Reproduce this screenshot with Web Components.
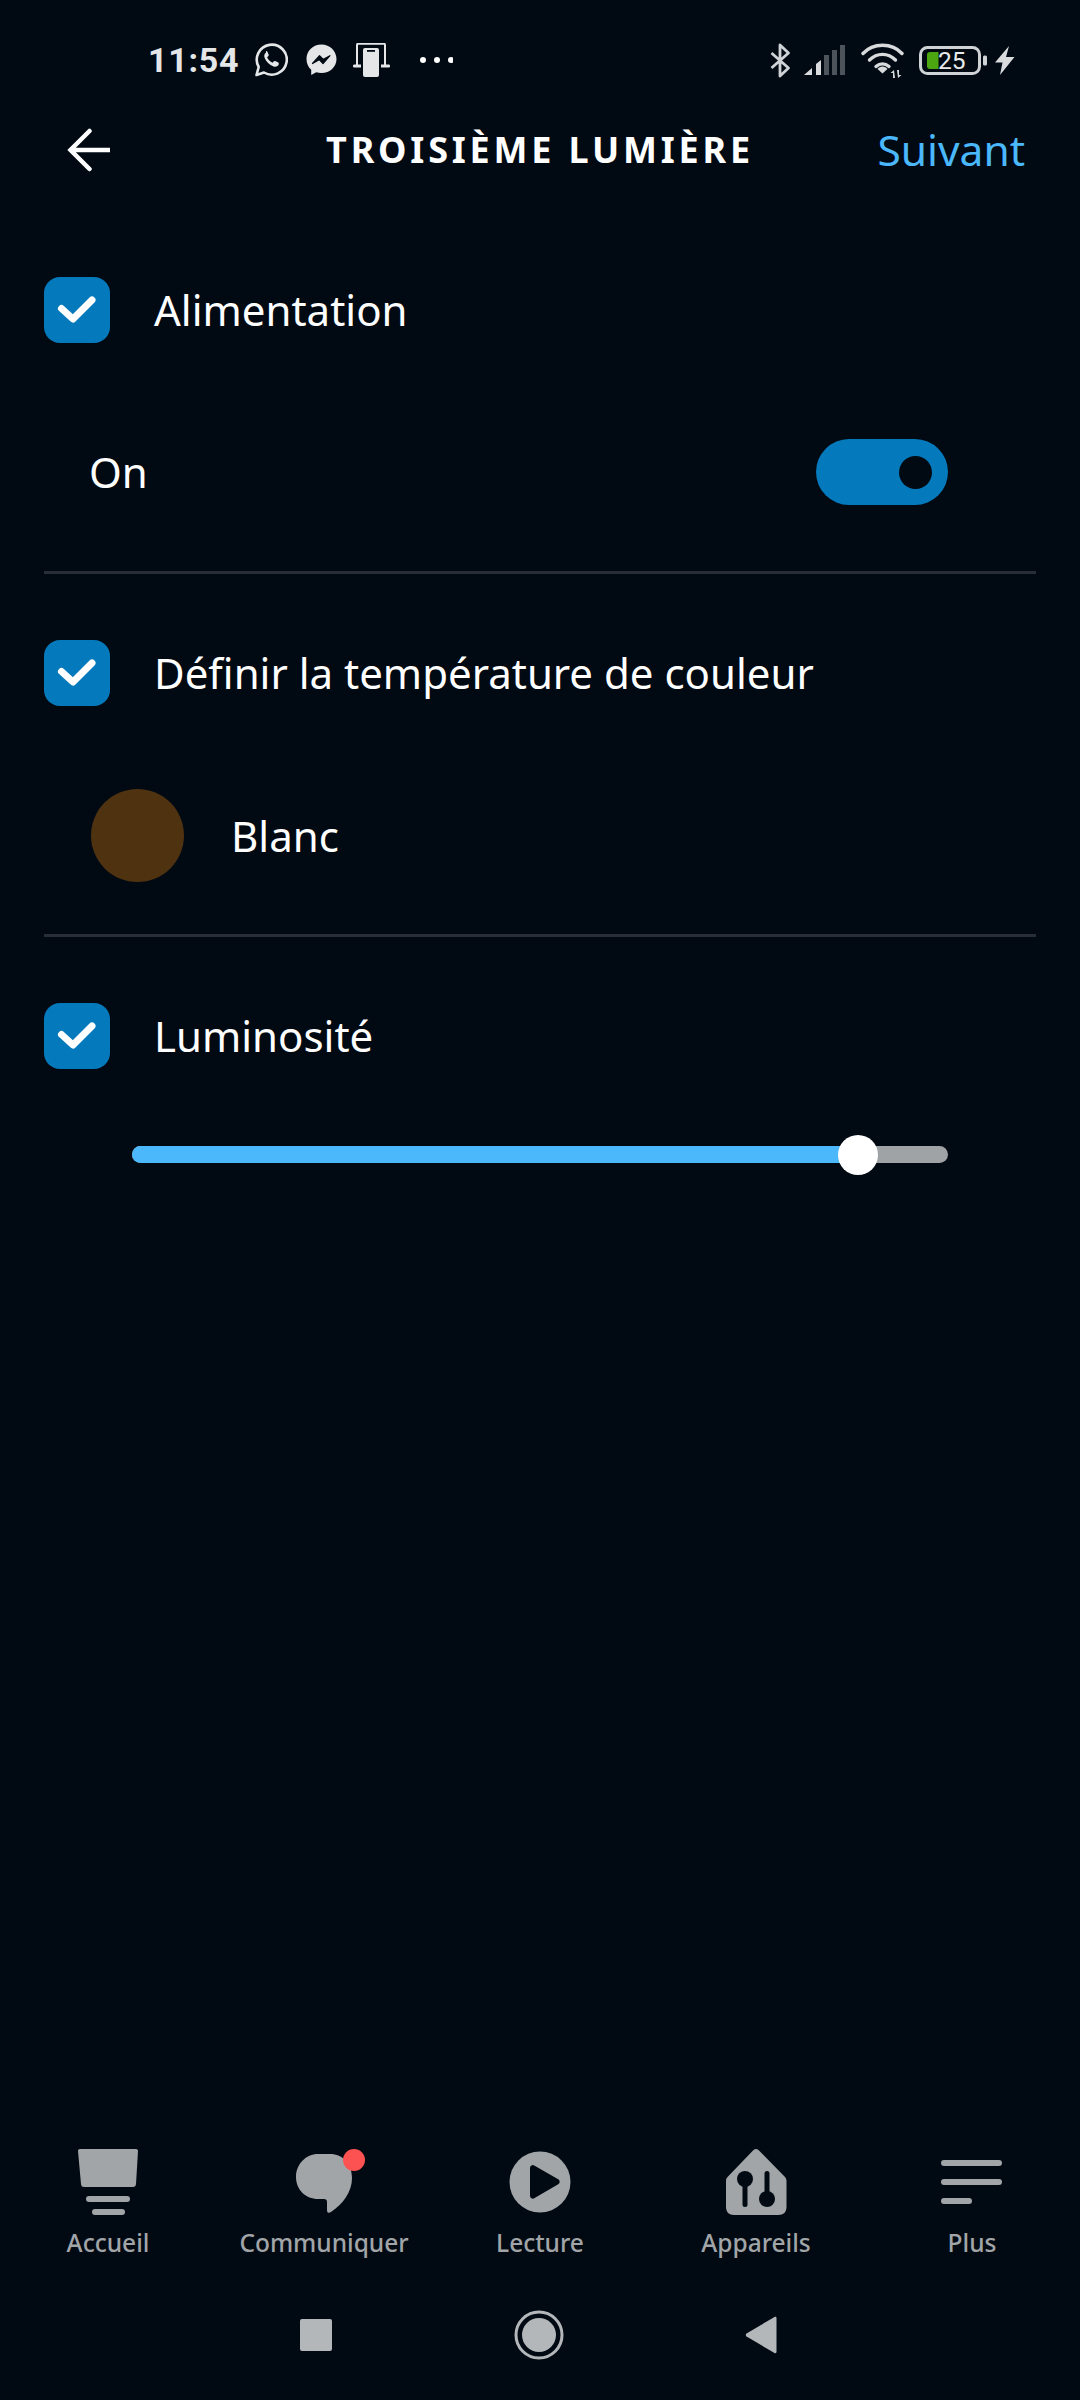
<!DOCTYPE html>
<html lang="fr"><head><meta charset="utf-8"><title>Troisième lumière</title>
<style>
html,body{margin:0;padding:0;background:#010a13}
body{width:1080px;height:2400px;font-family:"Noto Sans","Open Sans",sans-serif;color:#fff;overflow:hidden}
</style></head><body>
<x-app>
  <x-status slot="top"></x-status>
  <x-head slot="top" title-text="TROISIÈME LUMIÈRE" action="Suivant"></x-head>
  <x-check label="Alimentation" slot="main">
    <x-on-row></x-on-row>
  </x-check>
  <x-check label="Définir la température de couleur" slot="main">
    <x-color label="Blanc"></x-color>
  </x-check>
  <x-check label="Luminosité" slot="main" last>
    <x-slider value="89"></x-slider>
  </x-check>
  <x-nav slot="bottom">
    <x-nav-item label="Accueil"><svg viewBox="0 0 64 72" width="64" height="72"><path d="M4 3h56c1.200 0 2 .8 2 2l-2 33c-.1 2-1.200 3-3 3H8c-1.800 0-2.900-1-3-3L2 5c0-1.200.8-2 2-2z" fill="#a1a5a8"/><rect x="10" y="50" width="44" height="6" rx="3" fill="#a1a5a8"/><rect x="16" y="63" width="33" height="6" rx="3" fill="#a1a5a8"/></svg></x-nav-item>
    <x-nav-item label="Communiquer"><svg viewBox="0 0 72 72" width="72" height="72" style="overflow:visible"><path d="M30 8h12c13 0 22 10 22 24 0 14-9 26-21 34-2 1.500-4 1-4-2v-8c0-2-1-3-3-3h-6C18 53 8 44 8 31 8 18 18 8 30 8z" fill="#a1a5a8"/><circle cx="66" cy="14" r="11" fill="#fc5252"/></svg></x-nav-item>
    <x-nav-item label="Lecture"><svg viewBox="0 0 64 72" width="64" height="72"><circle cx="32" cy="36" r="30.500" fill="#a1a5a8"/><path d="M23 22c0-1.500 1.500-2.300 2.700-1.600l24 13.700c1.300.8 1.300 2.600 0 3.400l-24 13.900c-1.200.7-2.700-.1-2.700-1.600z" fill="#010a13" stroke="#010a13" stroke-width="2" stroke-linejoin="round"/></svg></x-nav-item>
    <x-nav-item label="Appareils"><svg viewBox="0 0 64 72" width="64" height="72"><path d="M29.500 4c1.400-1.500 3.600-1.500 5 0l26 26.500c1.300 1.300 2 2.800 2 4.500V61c0 5-3 8-8 8H10c-5 0-8-3-8-8V35c0-1.700.7-3.200 2-4.500z" fill="#a1a5a8"/><circle cx="21" cy="33" r="8" fill="#010a13"/><rect x="18.500" y="36" width="5" height="25" rx="2.500" fill="#010a13"/><circle cx="43" cy="53" r="8" fill="#010a13"/><rect x="40.500" y="25" width="5" height="30" rx="2.500" fill="#010a13"/></svg></x-nav-item>
    <x-nav-item label="Plus"><svg viewBox="0 0 64 72" width="64" height="72"><rect x="1" y="14" width="61" height="6" rx="3" fill="#a1a5a8"/><rect x="1" y="33" width="61" height="6" rx="3" fill="#a1a5a8"/><rect x="1" y="52" width="31" height="6" rx="3" fill="#a1a5a8"/></svg></x-nav-item>
  </x-nav>
  <x-sys slot="bottom"></x-sys>
</x-app>
<script>
const def=(n,html)=>{customElements.define(n,class extends HTMLElement{
  connectedCallback(){ if(this.shadowRoot)return; const s=this.attachShadow({mode:'open'});
    s.innerHTML=typeof html==='function'?html(this):html; }
});};

def('x-app',`<style>
:host{display:flex;flex-direction:column;height:2400px;width:1080px;background:#010a13}
.main{flex:1;padding:0 44px;display:flex;flex-direction:column}
</style><slot name="top"></slot><div class="main"><slot name="main"></slot></div><slot name="bottom"></slot>`);

def('x-status',`<style>
:host{display:flex;align-items:center;height:120px;box-sizing:border-box;padding:0 65px 0 148px;font-family:Roboto,sans-serif;color:#e4e6e8}
.t{font-size:34px;font-weight:700;letter-spacing:.7px;width:106px;line-height:40px}
svg{display:block;flex:none}
.sp{flex:1}
.bat{position:relative;width:68px;height:29px;margin-left:14px;flex:none}
.bat span{position:absolute;left:19px;top:0;font-size:24.500px;line-height:30px;color:#e8eaec}
</style>
<span class="t">11:54</span>
<svg width="34" height="34" viewBox="0 0 34 34"><path d="M2.500 32l2.200-8A15 15 0 1 1 10 29.500z" fill="none" stroke="#e4e6e8" stroke-width="2.600" stroke-linejoin="round"/><path d="M12 9.500c-1.500 1-2.200 3-1.500 5 1.500 4 5 7.500 9 9 2 .6 4 0 5-1.500.5-1 .5-2-.2-2.500l-3-1.500c-.7-.3-1.200 0-1.700.6l-1 1.200c-2.500-1-4.500-3-5.500-5.500l1.100-1c.5-.5.7-1 .4-1.700l-1.300-3c-.4-.6-1.500-.7-1.300-.1z" fill="#e4e6e8"/></svg>
<svg width="31" height="32" viewBox="0 0 31 32" style="margin-left:18px"><path d="M15.500 0.500C7 .5.500 6.700.500 15c0 4.400 1.800 8.200 4.700 10.800V31l5-2.700c1.700.5 3.500.7 5.300.7 8.500 0 15-6.200 15-14S24 .5 15.500.5z" fill="#e4e6e8"/><path d="M6.500 19.500l7-7.800 3.800 3.700 6.700-3.700-7 7.800-3.800-3.800z" fill="#010a13" stroke="#010a13" stroke-width="1.200" stroke-linejoin="round"/></svg>
<svg width="37" height="34" viewBox="0 0 37 34" style="margin-left:16px"><path d="M4 24V2c0-.8.500-1.300 1.300-1.300h25.400c.8 0 1.300.5 1.300 1.300v22" fill="#010a13" stroke="#e4e6e8" stroke-width="2"/><rect x="0" y="21.500" width="37" height="3" rx="1.300" fill="#e4e6e8"/><rect x="8" y="4" width="20" height="30" rx="2" fill="#010a13"/><rect x="10" y="5" width="16" height="29" rx="2" fill="#e4e6e8"/><rect x="14" y="7" width="8" height="1.800" fill="#010a13"/></svg>
<svg width="34" height="8" viewBox="0 0 34 8" style="margin-left:29px"><circle cx="4" cy="4" r="3" fill="#fff"/><circle cx="18" cy="4" r="3" fill="#fff"/><circle cx="32" cy="4" r="3" fill="#fff"/></svg>
<span class="sp"></span>
<svg width="23" height="35" viewBox="0 0 23 35"><path d="M2.500 10l17 15-8.500 8V2l8.500 8-17 15" fill="none" stroke="#d0d3d6" stroke-width="2.800" stroke-linejoin="round"/></svg>
<svg width="41" height="30" viewBox="0 0 41 30" style="margin-left:12px"><path d="M0 30l8-7v7z" fill="#d8dadc"/><path d="M12 19l5-4v15h-5z" fill="#d8dadc"/><rect x="20" y="10" width="5" height="20" fill="#4d535b"/><rect x="28" y="5" width="5" height="25" fill="#4d535b"/><rect x="36" y="0" width="5" height="30" fill="#4d535b"/></svg>
<svg width="44" height="36" viewBox="0 0 44 36" style="margin-left:16px"><g fill="none" stroke="#d8dadc" stroke-width="3.400" stroke-linecap="round"><path d="M2 11.500C12 .5 31 .5 41 11.500"/><path d="M8.500 18C16 10.500 27 10.500 34.500 18"/><path d="M15 24.500c4-3.500 9-3.500 13 0"/></g><path d="M21.500 24.500c2 0 4 1 5 2.500l-5 4.500-5-4.500c1-1.500 3-2.500 5-2.500z" fill="#d8dadc"/><path d="M33 28l-3.500 3h2.500v5h2zM37 36l3.500-3H38v-5h-2z" fill="#d8dadc"/></svg>
<span class="bat"><svg width="68" height="29" viewBox="0 0 68 29"><rect x="1.500" y="1.500" width="59" height="26" rx="7" fill="none" stroke="#d0d3d6" stroke-width="3"/><path d="M11 6h8.500v17H11c-2 0-3-1-3-3V9c0-2 1-3 3-3z" fill="#4ca60f"/><rect x="64" y="9.500" width="4" height="10" rx="1.500" fill="#d0d3d6"/></svg><span>25</span></span>
<svg width="20" height="29" viewBox="0 0 20 29" style="margin-left:8px"><path d="M14 0L0 16.500h7.500L5 29 19.500 11H11z" fill="#d8dadc"/></svg>`);

def('x-head',h=>`<style>
:host{display:grid;grid-template-columns:1fr auto 1fr;align-items:center;height:60px;padding:0 55px;margin-bottom:31px}
svg{display:block;margin-left:11px}
.t{font-size:36px;font-weight:700;letter-spacing:3.800px;line-height:60px;white-space:nowrap}
.a{justify-self:end;font-size:42.500px;color:#4ab8fb;line-height:60px}
</style>
<svg width="44" height="44" viewBox="0 0 44 44"><path d="M5 22H44M23.500 3L4.500 22l19 19" fill="none" stroke="#fff" stroke-width="4.500" stroke-linecap="round"/></svg>
<span class="t">${h.getAttribute('title-text')}</span>
<span class="a">${h.getAttribute('action')}</span>`);

def('x-check',h=>`<style>
:host{display:block;padding-top:66px;box-sizing:border-box}
:host(:not([last])){border-bottom:3px solid #282d36}
.r{display:flex;align-items:center;height:66px}
.b{width:66px;height:66px;border-radius:16px;background:#0479bc;flex:none}
.l{margin-left:44px;font-size:42px;line-height:66px;white-space:nowrap}
svg{display:block}
</style>
<div class="r"><span class="b"><svg width="66" height="66" viewBox="0 0 66 66"><path d="M17.500 31.500L29 42l19-19" fill="none" stroke="#fff" stroke-width="7" stroke-linecap="round" stroke-linejoin="round"/></svg></span><span class="l">${h.getAttribute('label')}</span></div>
<slot></slot>`);

def('x-on-row',`<style>
:host{display:flex;align-items:center;justify-content:space-between;height:66px;margin-top:96px;margin-bottom:66px;padding:0 88px 0 45px;font-size:42px;line-height:66px}
.sw{width:132px;height:66px;border-radius:33px;background:#0479bc;display:flex;align-items:center;justify-content:flex-end;padding-right:16.500px;box-sizing:border-box}
.k{width:33px;height:33px;border-radius:50%;background:#010a13}
</style><span>On</span><span class="sw"><span class="k"></span></span>`);

def('x-color',h=>`<style>
:host{display:flex;align-items:center;height:93px;margin-top:83px;margin-bottom:52px;padding-left:47px;font-size:42px}
.c{width:93px;height:93px;border-radius:50%;background:#4f3210;flex:none}
.l{margin-left:47px}
</style><span class="c"></span><span class="l">${h.getAttribute('label')}</span>`);

def('x-slider',h=>`<style>
:host{display:block;margin:77px 88px 0 88px;height:17px;position:relative}
.tr{height:17px;border-radius:8.500px;background:#a0a3a6;position:relative}
.f{height:17px;border-radius:8.500px 0 0 8.500px;background:#4ab8fb;width:${h.getAttribute('value')}%}
.k{position:absolute;left:${h.getAttribute('value')}%;top:50%;width:40px;height:40px;margin:-20px 0 0 -20px;border-radius:50%;background:#fff}
</style><div class="tr"><div class="f"></div><div class="k"></div></div>`);

def('x-nav',`<style>
:host{display:grid;grid-template-columns:repeat(5,1fr);height:120px;margin-bottom:44px}
</style><slot></slot>`);

def('x-nav-item',h=>`<style>
:host{display:flex;flex-direction:column;align-items:center;font-size:24.500px;font-weight:500;letter-spacing:0;color:#a1a5a8}
.i{height:72px;display:flex;justify-content:center}
.l{line-height:30px;margin-top:10px;white-space:nowrap}
</style><div class="i"><slot></slot></div><div class="l">${h.getAttribute('label')}</div>`);

def('x-sys',`<style>
:host{display:flex;justify-content:center;align-items:center;height:50px;padding-bottom:40px;padding-right:3px}
svg{display:block;flex:none}
</style>
<svg width="32" height="32" viewBox="0 0 32 32"><rect width="32" height="32" rx="2" fill="#b3b7ba"/></svg>
<svg width="50" height="50" viewBox="0 0 50 50" style="margin-left:182px"><circle cx="25" cy="25" r="23" fill="none" stroke="#b3b7ba" stroke-width="3"/><circle cx="25" cy="25" r="17" fill="#b3b7ba"/></svg>
<svg width="32" height="38" viewBox="0 0 32 38" style="margin-left:181px"><path d="M29.500 1l-28 16.500c-1 .7-1 2.300 0 3L29.500 37c1 .5 2 0 2-1V2c0-1-1-1.500-2-1z" fill="#b3b7ba"/></svg>`);
</script>
</body></html>
